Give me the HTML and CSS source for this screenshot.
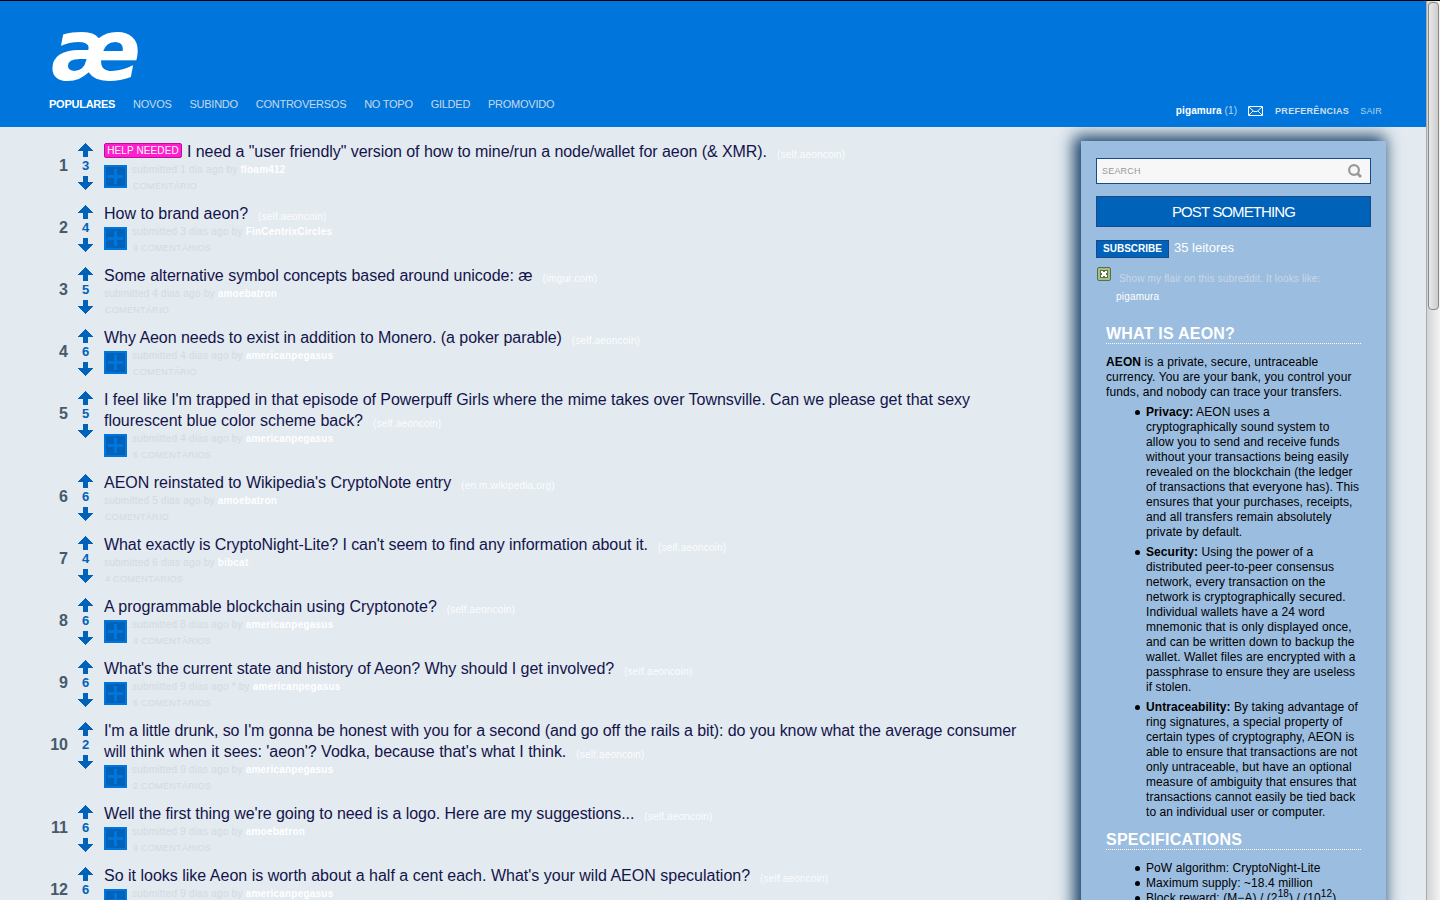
FILE: index.html
```
<!DOCTYPE html>
<html lang="pt">
<head>
    <meta charset="UTF-8">
    <title>aeoncoin</title>
    <link rel="stylesheet" href="styles.css">
</head>
<body>
    <svg class="defs" width="0" height="0">
        <symbol id="up" viewBox="0 0 15 14"><path d="M7 0h1v1h1v1h1v1h1v1h1v1h1v1h1v1h1v1h-5v6H5V8H0V7h1V6h1V5h1V4h1V3h1V2h1V1h1z"/></symbol>
        <symbol id="down" viewBox="0 0 15 14"><path d="M7 14h1v-1h1v-1h1v-1h1v-1h1V9h1V8h1V7h1V6h-5V0H5v6H0v1h1v1h1v1h1v1h1v1h1v1h1v1h1z"/></symbol>
    </svg>
    <div class="page">
        <div class="content">
            <header>
                <div class="logo">æ</div>
                <nav class="tabs">
                    <a class="selected">POPULARES</a>
                    <a>NOVOS</a>
                    <a>SUBINDO</a>
                    <a>CONTROVERSOS</a>
                    <a>NO TOPO</a>
                    <a>GILDED</a>
                    <a>PROMOVIDO</a>
                </nav>
                <div class="user">
                    <span class="name"><b>pigamura</b> (1)</span>
                    <svg class="mail" width="15" height="10" viewBox="0 0 15 10"><path d="M.5.5h14v9H.5zM1 1l5 4.500h3L14 1M1 9l4-4M14 9l-4-4" fill="none" stroke="#fff"/></svg>
                    <b class="prefs">PREFERÊNCIAS</b>
                    <span class="logout">SAIR</span>
                </div>
            </header>
            <div class="columns">
                <main id="links"></main>
                <aside>
                    <div class="search">
                        <span>SEARCH</span>
                        <svg width="14" height="14" viewBox="0 0 14 14"><circle cx="6" cy="6" r="4.900" fill="none" stroke="#999" stroke-width="2.200"/><path d="M9.300 9.300l3.700 3.700" stroke="#999" stroke-width="2.800"/></svg>
                    </div>
                    <div class="post">POST SOMETHING</div>
                    <div class="subscribe"><b>SUBSCRIBE</b><span>35 leitores</span></div>
                    <div class="flair">
                        <svg width="14" height="14" viewBox="0 0 14 14"><rect x=".5" y=".5" width="13" height="13" rx="1.500" fill="#a3c17c" stroke="#5b6b58"/><rect x="3" y="3" width="8" height="8" fill="#5d7350"/><path d="M4 4h2v1h2V4h2v2H9v2h1v2H8V9H6v1H4V8h1V6H4z" fill="#fff"/></svg>
                        <span>Show my flair on this subreddit. It looks like:</span>
                    </div>
                    <div class="me">pigamura</div>
                    <div class="md">
                        <h2>WHAT IS AEON?</h2>
                        <p><b>AEON</b> is a private, secure, untraceable<br>currency. You are your bank, you control your<br>funds, and nobody can trace your transfers.</p>
                        <ul class="long">
                            <li><b>Privacy:</b> AEON uses a<br>cryptographically sound system to<br>allow you to send and receive funds<br>without your transactions being easily<br>revealed on the blockchain (the ledger<br>of transactions that everyone has). This<br>ensures that your purchases, receipts,<br>and all transfers remain absolutely<br>private by default.</li>
                            <li><b>Security:</b> Using the power of a<br>distributed peer-to-peer consensus<br>network, every transaction on the<br>network is cryptographically secured.<br>Individual wallets have a 24 word<br>mnemonic that is only displayed once,<br>and can be written down to backup the<br>wallet. Wallet files are encrypted with a<br>passphrase to ensure they are useless<br>if stolen.</li>
                            <li><b>Untraceability:</b> By taking advantage of<br>ring signatures, a special property of<br>certain types of cryptography, AEON is<br>able to ensure that transactions are not<br>only untraceable, but have an optional<br>measure of ambiguity that ensures that<br>transactions cannot easily be tied back<br>to an individual user or computer.</li>
                        </ul>
                        <h2 class="specs">SPECIFICATIONS</h2>
                        <ul>
                            <li>PoW algorithm: CryptoNight-Lite</li>
                            <li>Maximum supply: ~18.4 million</li>
                            <li>Block reward: (M−A) / (2<sup>18</sup>) / (10<sup>12</sup>)</li>
                        </ul>
                    </div>
                </aside>
            </div>
        </div>
        <div class="scrollbar"><div class="thumb"></div></div>
    </div>
    <script src="links.js"></script>
</body>
</html>
```
FILE: styles.css
```
* {
    box-sizing: border-box;
}
body {
    margin: 0;
    height: 900px;
    overflow: hidden;
    background: #e3eaf0;
    font-family: "Liberation Sans", Arial, sans-serif;
    border-top: 1px solid #000;
}
.defs {
    display: none;
}
.page {
    display: flex;
    height: 899px;
    overflow: hidden;
}
.content {
    width: 1426px;
}
header {
    position: relative;
    height: 126px;
    background: #0076dc;
    color: #fff;
}
.logo {
    position: absolute;
    left: 51px;
    top: 6px;
    font: italic bold 86px/87px "DejaVu Sans", sans-serif;
}
.tabs {
    position: absolute;
    left: 49px;
    top: 96px;
    display: flex;
    gap: 17.9px;
    font-size: 11px;
    line-height: 14px;
    letter-spacing: -.25px;
    color: #c8d9e8;
}
.selected {
    color: #fff;
    font-weight: bold;
}
.user {
    position: absolute;
    right: 44px;
    top: 103px;
    display: flex;
    align-items: center;
    font-size: 10px;
    line-height: 14px;
    color: #b4d3ef;
}
.name {
    letter-spacing: .1px;
}
.name b {
    color: #fff;
}
.mail {
    margin: 0 12px 0 11px;
}
.prefs {
    font-size: 9px;
    color: #cfdfec;
    letter-spacing: .3px;
}
.logout {
    margin-left: 11px;
    font-size: 9px;
    letter-spacing: .2px;
}
.columns {
    display: flex;
    justify-content: space-between;
    height: 773px;
}
main {
    width: 1030px;
    padding-top: 14px;
}
.link {
    display: flex;
    height: 62px;
}
.link.tall {
    height: 83px;
}
.rank {
    width: 68px;
    padding-top: 16px;
    text-align: right;
    font-weight: bold;
    font-size: 16px;
    line-height: 18px;
    color: #465a6c;
}
.votes {
    display: flex;
    flex-direction: column;
    align-items: center;
    width: 15px;
    height: 49px;
    margin: 2px 11px 0 10px;
    font-weight: bold;
    font-size: 13px;
    line-height: 17px;
    color: #0062b8;
}
.votes span {
    height: 19px;
}
.votes svg {
    display: block;
    flex: none;
    fill: #0062b8;
}
.title {
    font-size: 16px;
    line-height: 21px;
    height: 21px;
    white-space: nowrap;
    color: #14144b;
}
.tall .title {
    height: 42px;
}
.domain {
    margin-left: 10px;
    position: relative;
    top: 1px;
    font-size: 10px;
    letter-spacing: .18px;
    line-height: 10px;
    color: #fcfdfd;
}
.tag {
    display: inline-block;
    height: 15px;
    width: 78px;
    margin-right: 5px;
    vertical-align: 3px;
    border: 1px solid #b80fa5;
    border-radius: 2px;
    background: #ff1dce;
    color: #fff;
    text-align: center;
    font-size: 10px;
    line-height: 13px;
    letter-spacing: .1px;
}
.meta {
    display: flex;
}
.expando {
    flex: none;
    margin: 3px 5px 0 0;
}
.tagline {
    font-size: 10px;
    line-height: 12px;
    padding-top: 2px;
    letter-spacing: .22px;
    white-space: nowrap;
    color: #d3dbe1;
}
.tagline b {
    color: #fff;
}
.comments {
    margin: 5px 0 0 1px;
    font-size: 9px;
    line-height: 10px;
    letter-spacing: .3px;
}
aside {
    width: 305px;
    height: 800px;
    margin: 14px 40px 0 0;
    padding: 17px 15px 0;
    background: #9bbde0;
    box-shadow: -4px -2px 15px 3px #174066;
}
.search {
    display: flex;
    justify-content: space-between;
    align-items: center;
    height: 26px;
    padding: 0 8px 0 5px;
    border: 1px solid #174a87;
    background: #f7f7f7;
    font-size: 9px;
    letter-spacing: .2px;
    color: #999;
}
.post {
    height: 31px;
    margin: 12px 0 13px;
    border: 1px solid #174a87;
    background: #0062b8;
    color: #fff;
    text-align: center;
    font-size: 15px;
    line-height: 30px;
    letter-spacing: -.9px;
}
.subscribe {
    display: flex;
    color: #fff;
    font-size: 13px;
    line-height: 15px;
}
.subscribe b {
    width: 73px;
    height: 18px;
    margin-right: 5px;
    border: 1px solid #174a87;
    background: #0062b8;
    text-align: center;
    font-size: 10px;
    line-height: 16px;
}
.flair {
    display: flex;
    margin: 9px 0 0 1px;
    font-size: 10px;
    color: #c9d8e6;
}
.flair span {
    margin: 6px 0 0 8px;
    line-height: 12px;
    white-space: nowrap;
    letter-spacing: .16px;
}
.me {
    margin: 6px 0 0 20px;
    font-size: 10px;
    line-height: 12px;
    color: #fff;
    letter-spacing: .2px;
}
.md {
    padding: 0 10px;
    font-size: 12px;
    line-height: 15px;
    letter-spacing: .08px;
    color: #000;
    white-space: nowrap;
}
.md p {
    letter-spacing: .11px;
}
h2 {
    margin: 21px 0 11px;
    height: 20px;
    border-bottom: 1px dotted #fff;
    color: #fff;
    font-size: 16px;
    line-height: 19px;
    letter-spacing: .22px;
}
h2.specs {
    margin-top: 10px;
}
p {
    margin: 0 0 5px;
}
ul {
    margin: 0;
    padding-left: 40px;
    list-style: none;
}
li::before {
    content: "";
    float: left;
    width: 5px;
    height: 5px;
    margin: 5px 0 0 -11px;
    border-radius: 50%;
    background: #000;
}
.long li {
    margin-bottom: 5px;
}
sup {
    font-size: 10px;
    line-height: 0;
}
.scrollbar {
    width: 14px;
    padding: 1px;
    border-left: 1px solid #aaa;
    background: linear-gradient(90deg, #d4d4d4, #f4f4f4);
}
.thumb {
    width: 11px;
    height: 308px;
    border: 1px solid #888;
    border-radius: 4px;
    background: linear-gradient(90deg, #e8e8e8, #cdcdcd);
}
```
FILE: links.js
```
// score, title lines as [text, tracking], domain, date, author, comments, has expando
const links = [
    [3, [['I need a "user friendly" version of how to mine/run a node/wallet for aeon (& XMR).', -.06]], 'self.aeoncoin', '1 dia ago by', 'floam412', 'COMENTÁRIO', true],
    [4, [['How to brand aeon?', 0]], 'self.aeoncoin', '3 dias ago by', 'FinCentrixCircles', '9 COMENTÁRIOS', true],
    [5, [['Some alternative symbol concepts based around unicode: æ', -.02]], 'imgur.com', '4 dias ago by', 'amoebatron', 'COMENTÁRIO', false],
    [6, [['Why Aeon needs to exist in addition to Monero. (a poker parable)', -.045]], 'self.aeoncoin', '4 dias ago by', 'americanpegasus', 'COMENTÁRIO', true],
    [5, [["I feel like I'm trapped in that episode of Powerpuff Girls where the mime takes over Townsville. Can we please get that sexy", -.036], ['flourescent blue color scheme back?', -.02]], 'self.aeoncoin', '4 dias ago by', 'americanpegasus', '6 COMENTÁRIOS', true],
    [6, [["AEON reinstated to Wikipedia's CryptoNote entry", -.02]], 'en.m.wikipedia.org', '5 dias ago by', 'amoebatron', 'COMENTÁRIO', false],
    [4, [["What exactly is CryptoNight-Lite? I can't seem to find any information about it.", -.075]], 'self.aeoncoin', '6 dias ago by', 'bibcat', '4 COMENTÁRIOS', false],
    [6, [['A programmable blockchain using Cryptonote?', .025]], 'self.aeoncoin', '8 dias ago by', 'americanpegasus', '4 COMENTÁRIOS', true],
    [6, [["What's the current state and history of Aeon? Why should I get involved?", -.06]], 'self.aeoncoin', '9 dias ago * by', 'americanpegasus', '6 COMENTÁRIOS', true],
    [2, [["I'm a little drunk, so I'm gonna be honest with you for a second (and go off the rails a bit): do you know what the average consumer", -.086], ["will think when it sees: 'aeon'? Vodka, because that's what I think.", -.02]], 'self.aeoncoin', '9 dias ago by', 'americanpegasus', '2 COMENTÁRIOS', true],
    [6, [["Well the first thing we're going to need is a logo. Here are my suggestions...", -.055]], 'self.aeoncoin', '9 dias ago by', 'amoebatron', '9 COMENTÁRIOS', true],
    [6, [["So it looks like Aeon is worth about a half a cent each. What's your wild AEON speculation?", 0]], 'self.aeoncoin', '9 dias ago by', 'americanpegasus', '6 COMENTÁRIOS', true]
];

const expando = '<svg class="expando" width="23" height="23"><path d="M1 1h21v21H1z" fill="#0062b8" stroke="#0076dc" stroke-width="2"/><path d="M4 10h6V4h3v6h6v3h-6v6h-3v-6H4z" fill="#0076dc"/></svg>';

const lines = title => title.map(([text, tracking]) =>
    `<span style="letter-spacing: ${tracking}px">${text.replace('& ', '&amp; ')}</span>`).join('<br>');

document.getElementById('links').innerHTML = links.map(([score, title, domain, when, author, comments, hasExpando], i) => `
    <div class="link ${title.length > 1 ? 'tall' : ''}">
        <div class="rank">${i + 1}</div>
        <div class="votes">
            <svg width="15" height="14"><use href="#up"/></svg>
            <span>${score}</span>
            <svg width="15" height="14"><use href="#down"/></svg>
        </div>
        <div class="entry">
            <div class="title">${i === 0 ? '<span class="tag">HELP NEEDED</span>' : ''}${lines(title)}<span class="domain">(${domain})</span></div>
            <div class="meta">
                ${hasExpando ? expando : ''}
                <div class="tagline">submitted ${when} <b>${author}</b><div class="comments">${comments}</div></div>
            </div>
        </div>
    </div>`).join('');
```
